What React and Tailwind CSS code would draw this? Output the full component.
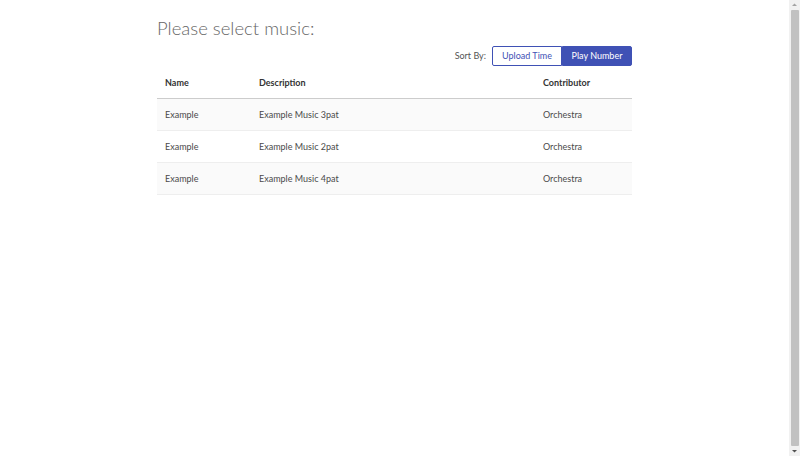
const rows = [
  { name: "Example", description: "Example Music 3pat", contributor: "Orchestra" },
  { name: "Example", description: "Example Music 2pat", contributor: "Orchestra" },
  { name: "Example", description: "Example Music 4pat", contributor: "Orchestra" },
];

const App = () => {
  return (
    <div className="flex h-[456px] overflow-hidden bg-white font-['Lato','Open_Sans',sans-serif] text-[#4a4a4a]">
      <div className="flex-1">
        <div className="mx-auto w-[475px] pt-[14px]">
          {/* Title */}
          <h1 className="font-['Lato',sans-serif] text-[18.5px] font-light leading-[28px] text-[#666]">
            Please select music:
          </h1>

          {/* Sort controls */}
          <div className="mt-[4px] flex items-center justify-end">
            <span className="mr-[6px] text-[9px] text-[#555]">Sort By:</span>
            <div className="flex h-[20px]">
              <button className="w-[70px] rounded-l-[2px] border border-[#3f51b5] bg-white text-[9px] text-[#3f51b5]">
                Upload Time
              </button>
              <button className="w-[70px] rounded-r-[2px] border border-[#3f51b5] bg-[#3f51b5] text-[9px] text-white">
                Play Number
              </button>
            </div>
          </div>

          {/* Table */}
          <div className="mt-[5px] text-[9px]">
            <div className="grid h-[28px] grid-cols-[94px_284px_1fr] items-center border-b border-[#ccc] pb-[4px] font-bold text-[#333]">
              <div className="pl-[8px]">Name</div>
              <div className="pl-[8px]">Description</div>
              <div className="pl-[8px]">Contributor</div>
            </div>
            {rows.map((row, i) => (
              <div
                key={i}
                className={`grid h-[32px] grid-cols-[94px_284px_1fr] items-center border-b border-[#eee] pt-[1px] ${
                  i % 2 === 0 ? "bg-[#fafafa]" : "bg-white"
                }`}
              >
                <div className="pl-[8px]">{row.name}</div>
                <div className="pl-[8px]">{row.description}</div>
                <div className="pl-[8px]">{row.contributor}</div>
              </div>
            ))}
          </div>
        </div>
      </div>

      {/* Scrollbar */}
      <div className="flex w-[11px] flex-col items-center bg-[#f1f1f1]">
        <svg width="11" height="10" viewBox="0 0 11 10">
          <path d="M3 6 L5.5 3.5 L8 6 Z" fill="#a3a3a3" />
        </svg>
        <div className="w-[8px] flex-1 rounded-[1px] bg-[#c1c1c1]" />
        <svg width="11" height="10" viewBox="0 0 11 10">
          <path d="M3 4 L5.5 6.5 L8 4 Z" fill="#505050" />
        </svg>
      </div>
    </div>
  );
};

export default App;
